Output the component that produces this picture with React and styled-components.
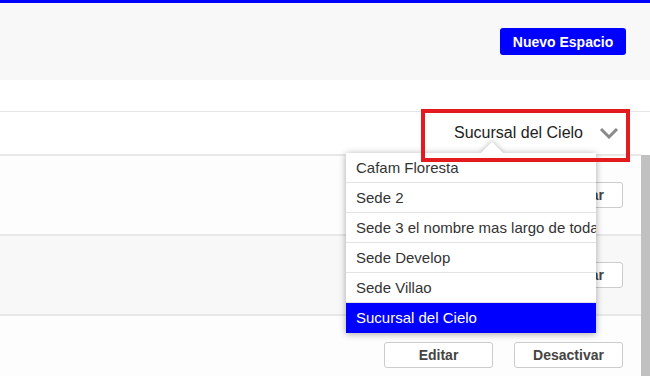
import styled, { createGlobalStyle } from "styled-components";

const GlobalStyle = createGlobalStyle`
  html, body {
    margin: 0;
    padding: 0;
    overflow: hidden;
    background: #fff;
    font-family: "Liberation Sans", Arial, sans-serif;
  }
  * { box-sizing: border-box; }
`;

const Page = styled.div`
  width: 650px;
  height: 376px;
  display: flex;
  flex-direction: column;
  overflow: hidden;
`;

const Header = styled.header`
  flex: none;
  height: 80px;
  border-top: 3px solid #0000ff;
  background: #f8f8f8;
  display: flex;
  align-items: center;
  justify-content: flex-end;
  padding-right: 24px;
`;

const PrimaryButton = styled.button`
  width: 126px;
  height: 27px;
  border: none;
  border-radius: 3px;
  background: #0000ff;
  color: #fff;
  font-family: "Liberation Sans", Arial, sans-serif;
  font-weight: 700;
  font-size: 14px;
  padding: 0;
  cursor: pointer;
`;

const Spacer = styled.div`
  flex: none;
  height: 32px;
  border-bottom: 1px solid #e6e6e6;
`;

const FilterBar = styled.div`
  flex: none;
  position: relative;
  z-index: 5;
  height: 42px;
  display: flex;
  align-items: center;
  justify-content: flex-end;
  padding-right: 31px;
`;

const SelectLabel = styled.span`
  font-size: 16px;
  color: #222;
  margin-right: 16px;
`;

const Menu = styled.ul`
  position: absolute;
  z-index: 10;
  top: 41px;
  right: 54px;
  width: 250px;
  margin: 0;
  padding: 0;
  list-style: none;
  background: #fff;
  box-shadow: 0 1px 7px rgba(0, 0, 0, 0.35);

  &::before {
    content: "";
    position: absolute;
    z-index: -1;
    top: -8px;
    left: 138px;
    width: 16px;
    height: 16px;
    background: #fff;
    transform: rotate(45deg);
    box-shadow: -1px -1px 5px rgba(0, 0, 0, 0.2);
  }
`;

const MenuItem = styled.li`
  height: 30px;
  line-height: 30px;
  padding-left: 10px;
  font-size: 15px;
  white-space: nowrap;
  overflow: hidden;
  color: ${(p) => (p.selected ? "#fff" : "#333")};
  background: ${(p) => (p.selected ? "#0000ff" : "#fff")};
  border-bottom: ${(p) => (p.last ? "none" : "1px solid #e2e2e2")};
`;

const Highlight = styled.div`
  position: absolute;
  z-index: 20;
  top: -3px;
  left: 421px;
  width: 209px;
  height: 53px;
  border: 4px solid #e31b1f;
  pointer-events: none;
`;

const ListArea = styled.div`
  flex: 1;
  min-height: 0;
  display: flex;
  overflow: hidden;
`;

const Rows = styled.div`
  flex: 1;
  display: flex;
  flex-direction: column;
`;

const ScrollThumb = styled.div`
  flex: none;
  width: 9px;
  margin-top: 1px;
  background: #c1c1c1;
`;

const Row = styled.div`
  flex: none;
  height: 80px;
  border-top: 2px solid #e8e8e8;
  background: ${(p) => (p.shaded ? "#f8f8f8" : "#fdfdfd")};
  display: flex;
  align-items: center;
  justify-content: flex-end;
  gap: 21px;
  padding-right: 18px;
`;

const RowButton = styled.button`
  width: 109px;
  height: 26px;
  border: 1px solid #cccccc;
  border-radius: 3px;
  background: #fff;
  color: #444;
  font-family: "Liberation Sans", Arial, sans-serif;
  font-weight: 700;
  font-size: 14px;
  padding: 0;
  cursor: pointer;
`;

const Chevron = () => (
  <svg width="20" height="12" viewBox="0 0 20 12">
    <polyline
      points="2,2 10,10 18,2"
      fill="none"
      stroke="#8a8a8a"
      strokeWidth="3"
    />
  </svg>
);

const sedes = [
  "Cafam Floresta",
  "Sede 2",
  "Sede 3 el nombre mas largo de todas",
  "Sede Develop",
  "Sede Villao",
  "Sucursal del Cielo",
];

const App = () => {
  return (
    <Page>
      <GlobalStyle />
      <Header>
        <PrimaryButton>Nuevo Espacio</PrimaryButton>
      </Header>
      <Spacer />
      <FilterBar>
        <SelectLabel>Sucursal del Cielo</SelectLabel>
        <Chevron />
        <Menu>
          {sedes.map((s, i) => (
            <MenuItem
              key={s}
              selected={s === "Sucursal del Cielo"}
              last={i === sedes.length - 1}
            >
              {s}
            </MenuItem>
          ))}
        </Menu>
        <Highlight />
      </FilterBar>
      <ListArea>
        <Rows>
          {[0, 1, 2].map((i) => (
            <Row key={i} shaded={i % 2 === 1}>
              <RowButton>Editar</RowButton>
              <RowButton>Desactivar</RowButton>
            </Row>
          ))}
        </Rows>
        <ScrollThumb />
      </ListArea>
    </Page>
  );
};

export default App;
